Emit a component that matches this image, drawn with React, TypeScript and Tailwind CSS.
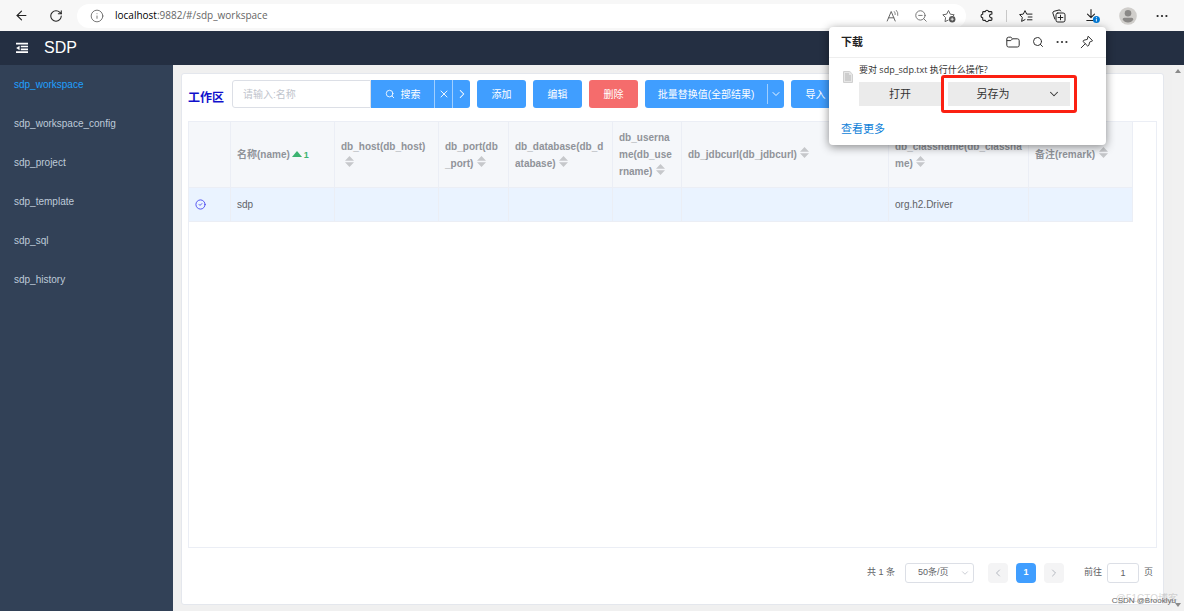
import { ArrowLeft, RotateCw, Info, ZoomOut, Search, ChevronDown, ChevronLeft, ChevronRight, X, CircleCheck } from "lucide-react";

type Column = {
  id: string;
  label: string;
  width: string;
  value?: string;
};

const menu = [
  "sdp_workspace",
  "sdp_workspace_config",
  "sdp_project",
  "sdp_template",
  "sdp_sql",
  "sdp_history",
];

const columns: Column[] = [
  { id: "name", label: "名称(name)", width: "w-[104px]", value: "sdp" },
  { id: "db_host", label: "db_host(db_host)", width: "w-[104px]" },
  { id: "db_port", label: "db_port(db_port)", width: "w-[70px]" },
  { id: "db_database", label: "db_database(db_database)", width: "w-[104px]" },
  { id: "db_username", label: "db_username(db_username)", width: "w-[69px]" },
  { id: "db_jdbcurl", label: "db_jdbcurl(db_jdbcurl)", width: "w-[207px]" },
  { id: "db_classname", label: "db_classname(db_classname)", width: "w-[140px]", value: "org.h2.Driver" },
  { id: "remark", label: "备注(remark)", width: "w-[104px]" },
];

function FoldIcon() {
  return (
    <svg viewBox="0 0 12 12" className="h-3 w-3" fill="currentColor">
      <path d="M0 .8h12v1.8H0zM4.8 3.7H12v1.6H4.8zM4.8 6.6H12v1.6H4.8zM0 9.3h12v1.8H0zM3.6 3.7v4.5L.2 6z" />
    </svg>
  );
}

function DotsIcon() {
  return (
    <svg viewBox="0 0 12 12" className="h-3 w-3" fill="currentColor">
      <circle cx="1.6" cy="6" r="1.1" />
      <circle cx="6" cy="6" r="1.1" />
      <circle cx="10.4" cy="6" r="1.1" />
    </svg>
  );
}

function ReadAloudIcon() {
  return (
    <svg viewBox="0 0 14 14" className="h-3.5 w-3.5" fill="none" stroke="currentColor" strokeLinecap="round">
      <path d="M1.2 12 5.2 2.5 9.2 12M2.6 8.8h5.2" />
      <path d="M8.4 2.6q1.2 1.2.8 3M10.4 1.4q2 2 1.4 5" strokeWidth=".8" />
    </svg>
  );
}

function StarAddIcon() {
  return (
    <svg viewBox="0 0 14 14" className="h-3.5 w-3.5" fill="none" stroke="currentColor" strokeLinejoin="round">
      <path d="M6.5 11 3 12.6l.6-4L.8 5.8l3.8-.6L6.5 1.5l1.8 3.7 3.9.6-1.2 1.2" />
      <circle cx="10.2" cy="10.2" r="3.2" fill="#555" stroke="none" />
      <path d="M8.6 10.2h3.2M10.2 8.6v3.2" stroke="#fff" strokeWidth=".8" />
    </svg>
  );
}

function PuzzleIcon() {
  return (
    <svg viewBox="0 0 14 14" className="h-3.5 w-3.5" fill="none" stroke="currentColor" strokeWidth="1.1" strokeLinejoin="round">
      <path d="M3.6 2.6h1.7a1.7 1.7 0 0 1 3.3 0H11q.9 0 .9.9v1.6a1.9 1.9 0 1 0 0 3.7v1.7q0 .9-.9.9H8.6a1.7 1.7 0 0 1-3.3 0H3.6q-.9 0-.9-.9V8.7a1.7 1.7 0 0 1 0-3.4V3.5q0-.9.9-.9z" />
    </svg>
  );
}

function FavoritesIcon() {
  return (
    <svg viewBox="0 0 14 14" className="h-3.5 w-3.5" fill="none" stroke="currentColor" strokeLinejoin="round" strokeLinecap="round">
      <path d="M6 10.6 2.6 12.4l.7-4L.6 5.6l3.7-.5L6 1.6l1.7 3.5H13M9.2 8h3.8M8.4 10.8H13" />
    </svg>
  );
}

function CollectionsIcon() {
  return (
    <svg viewBox="0 0 14 14" className="h-3.5 w-3.5" fill="none" stroke="currentColor" strokeLinejoin="round" strokeLinecap="round">
      <rect x="4" y="4" width="9" height="9" rx="1.8" />
      <path d="M2.8 10 .9 4.2q-.4-1.4 1-1.9L7 1q1.3-.3 1.8 1M8.5 6.2v4.6M6.2 8.5h4.6" />
    </svg>
  );
}

function DownloadIcon() {
  return (
    <svg viewBox="0 0 15 15" className="h-[15px] w-[15px]" fill="none" stroke="currentColor" strokeLinejoin="round" strokeLinecap="round">
      <path d="M6 1.5v8M2.5 6.2 6 9.7l3.5-3.5M1.8 12.5h6.4" strokeWidth="1.1" />
      <circle cx="11.4" cy="11.4" r="3.5" fill="#0078d4" stroke="none" />
      <path d="M11.4 11.1v2M11.4 9.5v.1" stroke="#fff" strokeWidth=".9" />
    </svg>
  );
}

function AvatarIcon() {
  return (
    <svg viewBox="0 0 18 18" className="h-[18px] w-[18px]">
      <circle cx="9" cy="9" r="8.8" fill="#d0cecb" />
      <circle cx="9" cy="6.3" r="3.3" fill="#8a8886" />
      <path d="M3.6 12.6q0-1.8 1.8-1.8h7.2q1.8 0 1.8 1.8-1.8 3-5.4 3t-5.4-3z" fill="#8a8886" />
    </svg>
  );
}

function FolderIcon() {
  return (
    <svg viewBox="0 0 14 12" className="h-3 w-3.5" fill="none" stroke="currentColor" strokeLinejoin="round">
      <path d="M.8 3q0-1.8 1.8-1.8h2.2L6.6 2.8h4.8q1.8 0 1.8 1.8v4.6q0 1.8-1.8 1.8H2.6Q.8 11 .8 9.2zM.8 4.6h4L6.6 2.8" />
    </svg>
  );
}

function PinIcon() {
  return (
    <svg viewBox="0 0 14 14" className="h-3.5 w-3.5" fill="none" stroke="currentColor" strokeLinejoin="round" strokeLinecap="round">
      <path d="M8.4 1.5 12.6 5.7 9.6 7.2 8.9 10.2 7.8 11.2 2.9 6.3 3.9 5.2 6.9 4.5zM5.2 8.8 1.2 12.8" />
    </svg>
  );
}

function TextFileIcon() {
  return (
    <svg viewBox="0 0 10 12" className="mt-[9px] h-3 w-2.5" fill="none">
      <path d="M.5.5h6.3l2.7 2.7v8.3h-9z" fill="#e6e6e6" stroke="#d0d0d0" />
      <path d="M2 3h4M2 5h6M2 7h6M2 9h6" stroke="#b5b5b5" />
    </svg>
  );
}

function SortCarets() {
  return (
    <span className="inline-flex h-3 w-4 items-center justify-center align-baseline">
      <svg viewBox="0 0 9 11" className="h-[11px] w-[9px]" fill="#c6c8cb">
        <path d="M4.5 0 9 4.7H0zM4.5 11 9 6.3H0z" />
      </svg>
    </span>
  );
}

function BrowserBar() {
  return (
    <div className="flex h-[31px] shrink-0 items-center bg-[#f7f7f7] text-[#222]">
      <button aria-label="Back" className="ml-3.5 mr-5">
        <ArrowLeft className="h-[15px] w-[15px]" strokeWidth={1.8} />
      </button>
      <button aria-label="Refresh" className="mr-3.5">
        <RotateCw className="h-3.5 w-3.5" strokeWidth={1.8} />
      </button>
      <div className="flex h-6 flex-1 items-center rounded-full bg-white pl-[13px] pr-2.5 text-[#666]">
        <Info className="h-3.5 w-3.5" strokeWidth={1.5} />
        <span className="ml-[11px] flex-1 font-['Open_Sans',sans-serif] text-[10px]">
          <span className="text-black">localhost</span>:9882/#/sdp_workspace
        </span>
        <div className="flex items-center gap-3.5">
          <button aria-label="Read aloud"><ReadAloudIcon /></button>
          <button aria-label="Zoom"><ZoomOut className="h-3.5 w-3.5" strokeWidth={1.5} /></button>
          <button aria-label="Add to favorites"><StarAddIcon /></button>
        </div>
      </div>
      <div className="flex items-center pl-3.5 pr-4">
        <button aria-label="Extensions"><PuzzleIcon /></button>
        <span className="mx-3 h-3 w-px bg-[#c8c8c8]" />
        <div className="flex items-center gap-[19px]">
          <button aria-label="Favorites"><FavoritesIcon /></button>
          <button aria-label="Collections"><CollectionsIcon /></button>
          <button aria-label="Downloads"><DownloadIcon /></button>
          <button aria-label="Profile"><AvatarIcon /></button>
          <button aria-label="Settings"><DotsIcon /></button>
        </div>
      </div>
    </div>
  );
}

function DownloadsPopup() {
  return (
    <div className="absolute right-[78px] top-[27px] z-10 w-[277px] rounded bg-white pb-2 font-['Open_Sans','Noto_Sans_CJK_SC',sans-serif] text-[11px] leading-4 text-[#333] shadow-[0_2px_10px_rgba(0,0,0,0.45)]">
      <div className="flex h-[31px] items-center border-b border-[#eee] px-3">
        <h2 className="flex-1 font-bold text-[#222]">下载</h2>
        <div className="flex items-center gap-3">
          <button aria-label="Open folder"><FolderIcon /></button>
          <button aria-label="Search downloads"><Search className="h-3 w-3" strokeWidth={2} /></button>
          <button aria-label="More"><DotsIcon /></button>
          <button aria-label="Pin"><PinIcon /></button>
        </div>
      </div>
      <div className="flex pl-3.5 pt-1">
        <TextFileIcon />
        <div className="ml-1.5 flex-1">
          <p className="text-[9px]">要对 sdp_sdp.txt 执行什么操作?</p>
          <div className="flex">
            <button className="mt-1 h-6 w-[82px] bg-[#ebebeb]">打开</button>
            <div className="-mt-[3px] h-[38px] w-[136px] rounded-[3px] border-[3px] border-[#fb2012] p-1">
              <div className="flex h-6 bg-[#ebebeb]">
                <button className="flex-1">另存为</button>
                <button aria-label="More save options" className="flex w-8 items-center justify-center">
                  <ChevronDown className="h-3.5 w-3.5" strokeWidth={1.8} />
                </button>
              </div>
            </div>
          </div>
        </div>
      </div>
      <a href="#" className="mx-3 mt-2 block text-[#0f7fd8]">查看更多</a>
    </div>
  );
}

function Toolbar() {
  return (
    <div className="flex h-7 shrink-0 items-center gap-[7px] overflow-hidden text-white">
      <h1 className="w-[37px] shrink-0 self-end text-[12px] font-bold leading-5 text-[#1010cc]">工作区</h1>
      <div className="flex h-7 shrink-0">
        <input
          aria-label="名称"
          placeholder="请输入:名称"
          className="w-[139px] rounded-l-[3px] border border-[#dcdfe6] px-2.5 text-[#606266] placeholder:text-[#c0c4cc]"
        />
        <button className="flex w-[63px] items-center justify-center gap-1.5 bg-[#409eff]">
          <Search className="h-2.5 w-2.5" />
          搜索
        </button>
        <button aria-label="清空" className="flex w-[18px] items-center justify-center border-l border-[#a0cfff] bg-[#409eff]">
          <X className="h-3 w-3" strokeWidth={1.8} />
        </button>
        <button aria-label="展开" className="flex w-[18px] items-center justify-center rounded-r-[3px] border-l border-[#a0cfff] bg-[#409eff]">
          <ChevronRight className="h-3.5 w-3.5" strokeWidth={1.8} />
        </button>
      </div>
      <button className="h-7 w-[49px] shrink-0 rounded-[3px] bg-[#409eff]">添加</button>
      <button className="h-7 w-[49px] shrink-0 rounded-[3px] bg-[#409eff]">编辑</button>
      <button className="h-7 w-[49px] shrink-0 rounded-[3px] bg-[#f56c6c]">删除</button>
      <div className="flex h-7 shrink-0 items-center rounded-[3px] bg-[#409eff]">
        <button className="w-[122px]">批量替换值(全部结果)</button>
        <button aria-label="更多" className="flex h-5 w-[17px] items-center justify-center border-l border-[#a0cfff]">
          <ChevronDown className="h-3 w-3" strokeWidth={1.8} />
        </button>
      </div>
      <button className="h-7 w-[49px] shrink-0 rounded-[3px] bg-[#409eff]">导入</button>
    </div>
  );
}

function DataTable() {
  return (
    <div className="mt-[13px] flex-1 overflow-hidden border border-[#ebeef5]">
      <table className="w-[944px] table-fixed border-separate border-spacing-0 text-left">
        <thead className="bg-[#f5f7fa] text-[#909399]">
          <tr className="h-[66px]">
            <th className="w-[42px] border-b border-r border-[#ebeef5]" />
            {columns.map((col) => (
              <th
                key={col.id}
                className={`${col.width} break-all border-b border-r border-[#ebeef5] px-1.5 font-bold leading-[17px]`}
              >
                {col.label}
                {col.id === "name" ? (
                  <span className="ml-0.5 text-[9px] text-[#3cb371]">
                    <svg viewBox="0 0 10 6" className="mr-0.5 inline h-1.5 w-2.5 align-[1px]" fill="currentColor">
                      <path d="M5 0l5 6H0z" />
                    </svg>
                    1
                  </span>
                ) : (
                  <SortCarets />
                )}
              </th>
            ))}
          </tr>
        </thead>
        <tbody className="bg-[#eaf3ff] text-[#606266]">
          <tr className="h-[34px]">
            <td className="border-b border-r border-[#ebeef5] px-1.5">
              <CircleCheck className="h-[11px] w-[11px] text-[#4848f0]" />
            </td>
            {columns.map((col) => (
              <td key={col.id} className="border-b border-r border-[#ebeef5] px-1.5">
                {col.value}
              </td>
            ))}
          </tr>
        </tbody>
      </table>
    </div>
  );
}

function Pagination() {
  return (
    <div className="my-[15px] flex h-5 shrink-0 items-center justify-end pr-1 text-[9px] text-[#606266]">
      <span className="mr-2.5">共 1 条</span>
      <div className="relative mr-3.5">
        <select aria-label="每页条数" className="block h-5 w-[69px] appearance-none rounded-[3px] border border-[#dcdfe6] pl-3">
          <option>50条/页</option>
        </select>
        <ChevronDown className="pointer-events-none absolute right-1 top-[5px] h-2.5 w-2.5 text-[#c0c4cc]" />
      </div>
      <div className="mr-5 flex gap-2">
        <button aria-label="上一页" className="flex h-5 w-5 items-center justify-center rounded-sm bg-[#f4f4f5] text-[#b4b8c0]">
          <ChevronLeft className="h-3 w-3" />
        </button>
        <button className="h-5 w-5 rounded-sm bg-[#409eff] font-bold text-white">1</button>
        <button aria-label="下一页" className="flex h-5 w-5 items-center justify-center rounded-sm bg-[#f4f4f5] text-[#b4b8c0]">
          <ChevronRight className="h-3 w-3" />
        </button>
      </div>
      <label className="flex items-center gap-[5px]">
        前往
        <input defaultValue="1" className="h-5 w-8 rounded-[3px] border border-[#dcdfe6] text-center" />
        页
      </label>
    </div>
  );
}

export default function App() {
  return (
    <div className="relative flex h-screen flex-col overflow-hidden bg-[#f0f0f0] font-['Liberation_Sans','Noto_Sans_CJK_SC',sans-serif] text-[10px]">
      <BrowserBar />
      <header className="flex h-[34px] shrink-0 items-center bg-[#242f42] pl-4 text-white">
        <button aria-label="折叠菜单"><FoldIcon /></button>
        <span className="ml-4 text-base">SDP</span>
      </header>
      <div className="flex min-h-0 flex-1">
        <nav className="w-[173px] shrink-0 bg-[#324157] text-[#bfcbd9]">
          {menu.map((item, i) => (
            <a
              key={item}
              href={`#/${item}`}
              className={`flex h-[39px] items-center pl-3.5 ${i === 0 ? "text-[#20a0ff]" : ""}`}
            >
              {item}
            </a>
          ))}
        </nav>
        <main className="flex min-w-0 flex-1 flex-col px-2 pb-1.5 pt-2">
          <section className="flex min-h-0 flex-1 flex-col rounded-[3px] border border-[#e4e7ed] bg-white p-1.5">
            <Toolbar />
            <DataTable />
            <Pagination />
          </section>
        </main>
        <div className="flex w-3 shrink-0 flex-col items-center justify-between bg-[#f1f1f1] py-1 text-[#8a8a8a]">
          <svg viewBox="0 0 6 4" className="h-1 w-1.5" fill="currentColor"><path d="M3 0l3 4H0z" /></svg>
          <svg viewBox="0 0 6 4" className="h-1 w-1.5" fill="currentColor"><path d="M3 4l3-4H0z" /></svg>
        </div>
      </div>
      <DownloadsPopup />
      {/* watermarks */}
      <p className="absolute bottom-1 right-1.5 text-[10px] leading-4 text-[#999]/40">@51CTO博客</p>
      <p className="absolute bottom-0.5 right-2 text-[8px] leading-4 text-[#666]">CSDN @Brooklyu</p>
    </div>
  );
}
